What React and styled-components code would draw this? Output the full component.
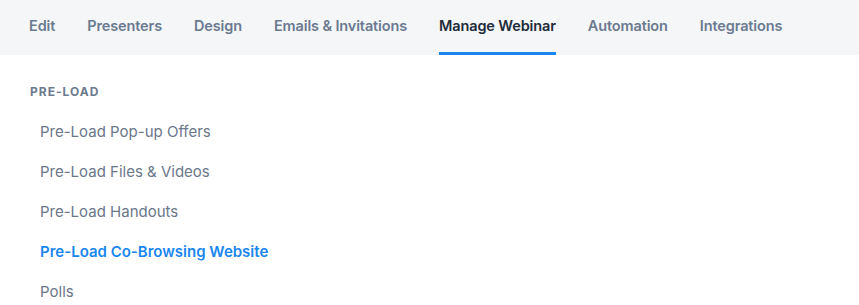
import React from "react";
import styled, { createGlobalStyle } from "styled-components";

const Global = createGlobalStyle`
  html, body { margin: 0; padding: 0; background: #ffffff; }
  body { font-family: "Inter", "Noto Sans", sans-serif; -webkit-font-smoothing: antialiased; }
`;

const TabBar = styled.nav`
  display: flex;
  gap: 32px;
  height: 55px;
  padding-left: 29px;
  background: #f4f6f8;
  box-sizing: border-box;
`;

const Tab = styled.a`
  display: flex;
  align-items: center;
  height: 100%;
  padding-bottom: 5px;
  box-sizing: border-box;
  font-size: 14.5px;
  letter-spacing: -0.13px;
  font-weight: 600;
  color: ${(p) => (p.$active ? "#222b3a" : "#6b7a90")};
  text-decoration: none;
  white-space: nowrap;
  border-bottom: 3px solid ${(p) => (p.$active ? "#1a87ee" : "transparent")};
  border-top: 3px solid transparent;
`;

const Section = styled.section`
  display: flex;
  flex-direction: column;
  padding: 30px 0 0 30px;
`;

const SectionTitle = styled.h3`
  margin: 0 0 13px;
  font-size: 12px;
  font-weight: 700;
  letter-spacing: 1px;
  color: #6e7b8e;
  line-height: 14px;
`;

const Item = styled.a`
  display: block;
  padding-left: 10px;
  height: 40px;
  line-height: 40px;
  font-size: 15px;
  font-weight: ${(p) => (p.$active ? 600 : 400)};
  color: ${(p) => (p.$active ? "#1a87ee" : "#6b778a")};
  text-decoration: none;
  white-space: nowrap;
`;

const tabs = ["Edit", "Presenters", "Design", "Emails & Invitations", "Manage Webinar", "Automation", "Integrations"];
const items = ["Pre-Load Pop-up Offers", "Pre-Load Files & Videos", "Pre-Load Handouts", "Pre-Load Co-Browsing Website", "Polls"];

export default function App() {
  return (
    <>
      <Global />
      <TabBar>
        {tabs.map((t) => (
          <Tab key={t} $active={t === "Manage Webinar"}>{t}</Tab>
        ))}
      </TabBar>
      <Section>
        <SectionTitle>PRE-LOAD</SectionTitle>
        {items.map((t) => (
          <Item key={t} $active={t === "Pre-Load Co-Browsing Website"}>{t}</Item>
        ))}
      </Section>
    </>
  );
}
